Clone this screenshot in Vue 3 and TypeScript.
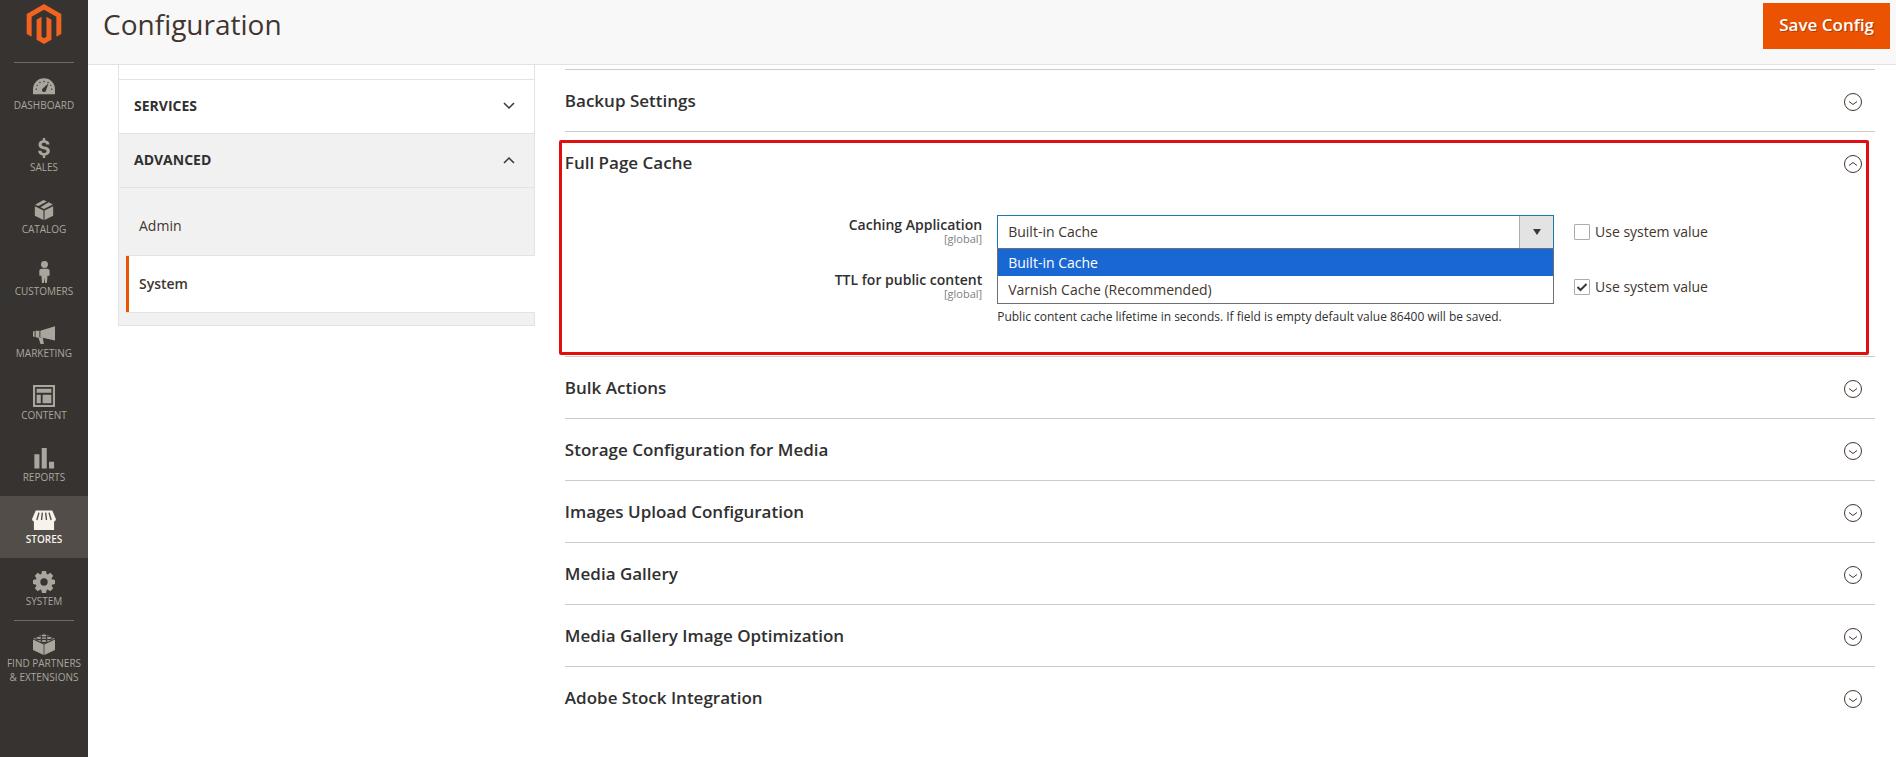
<script setup lang="ts">
import { ref } from 'vue'

interface MenuItem { id: string; label: string; active?: boolean; divided?: boolean }
interface Section { id: string; title: string }

const menu: MenuItem[] = [
  { id: 'dashboard', label: 'Dashboard' },
  { id: 'sales', label: 'Sales' },
  { id: 'catalog', label: 'Catalog' },
  { id: 'customers', label: 'Customers' },
  { id: 'marketing', label: 'Marketing' },
  { id: 'content', label: 'Content' },
  { id: 'reports', label: 'Reports' },
  { id: 'stores', label: 'Stores', active: true },
  { id: 'system', label: 'System' },
  { id: 'partners', label: 'Find Partners & Extensions', divided: true },
]

const sections: Section[] = [
  { id: 'backup', title: 'Backup Settings' },
  { id: 'cache', title: 'Full Page Cache' },
  { id: 'bulk', title: 'Bulk Actions' },
  { id: 'storage', title: 'Storage Configuration for Media' },
  { id: 'upload', title: 'Images Upload Configuration' },
  { id: 'gallery', title: 'Media Gallery' },
  { id: 'optimization', title: 'Media Gallery Image Optimization' },
  { id: 'stock', title: 'Adobe Stock Integration' },
]

const cacheOptions = ['Built-in Cache', 'Varnish Cache (Recommended)']
const cacheApp = ref(cacheOptions[0])
const appInherit = ref(false)
const ttlInherit = ref(true)
const ttl = ref('86400')
</script>

<template>
  <div class="page">
    <aside class="menu">
      <a class="logo" href="#" aria-label="Magento Admin">
        <svg viewBox="0 0 24 24" width="40" height="40" fill="#f26322">
          <path d="M12 24l-4.455-2.572v-12l2.97-1.715v12.001l1.485.902 1.485-.902V7.713l2.971 1.715v12L12 24zM22.391 6v12l-2.969 1.714V7.713L12 3.43 4.574 7.713v12.001L1.609 18V6L12 0l10.391 6z" />
        </svg>
      </a>
      <nav aria-label="Main menu">
        <a
          v-for="item in menu"
          :key="item.id"
          href="#"
          class="menu-item"
          :class="{ active: item.active, divided: item.divided }"
        >
          <svg class="menu-icon" viewBox="0 0 24 24" fill="currentColor" aria-hidden="true">
            <template v-if="item.id === 'dashboard'">
              <path d="M0 21v-5.500a12 12 0 0 1 24 0V21z" />
              <g fill="#373330">
                <circle cx="3.500" cy="15.500" r=".8" /><circle cx="4.600" cy="11.300" r=".8" /><circle cx="7.600" cy="8.200" r=".8" />
                <circle cx="12" cy="7" r=".8" /><circle cx="16.400" cy="8.200" r=".8" /><circle cx="20.500" cy="15.500" r=".8" /><circle cx="19.400" cy="11.300" r=".8" />
                <path d="M17 9l-2.800 7.500a2.200 2.200 0 1 1-3.200-2z" />
              </g>
            </template>
            <path
              v-else-if="item.id === 'sales'"
              d="M10.700 1h2.600v2.600c2.700.4 4.600 2 4.800 4.700h-3.600c-.2-1.300-1-2-2.500-2-1.600 0-2.500.7-2.500 1.800 0 1.200 1 1.700 3.200 2.200 3.400.8 5.700 1.900 5.700 5 0 2.700-1.900 4.500-5.100 4.900v2.600h-2.600v-2.600c-3.100-.4-5-2.200-5.100-5.200h3.600c.1 1.700 1.100 2.500 3 2.500 1.700 0 2.600-.7 2.600-1.900 0-1.300-.9-1.700-3.200-2.200-3.300-.8-5.600-1.900-5.600-5 0-2.500 1.700-4.300 4.700-4.800z"
            />
            <g v-else-if="item.id === 'catalog'">
              <path d="M2 8l9.400 4.600v10.400L2 18.200zM22 8l-9.400 4.600v10.400l9.400-4.800zM11.500 1l3.600 1.700-9.200 5L2.300 6.200zM17.200 3.600l4.500 2.400-9.700 5-3.800-2.100z" />
            </g>
            <g v-else-if="item.id === 'customers'">
              <circle cx="12.500" cy="3.800" r="3.800" />
              <path d="M9.500 8.500h6c1.700 0 2.600 1 2.600 2.500v5h-2.300l-.6 8h-2.100l-.6-6-.6 6H9.800L9.200 16H6.900v-5c0-1.500.9-2.500 2.600-2.500z" />
            </g>
            <g v-else-if="item.id === 'marketing'">
              <path d="M24 3.500v15.500L8 15.500v-7zM0 9.300l1.800-.6v6.600L0 14.700zM2.800 8.500H7v7l3.800.9 1 6.600H8.200L6 16l-3.200-.4z" />
            </g>
            <path
              v-else-if="item.id === 'content'"
              fill-rule="evenodd"
              d="M0 0h24v24H0zM2.300 2.300v19.400h19.400V2.300zM4 4h16v4.500H4zM4 10.500h4.500V20H4zM10.500 10.500H20V20h-9.500z"
            />
            <path v-else-if="item.id === 'reports'" d="M1.500 8h5.500v15.500H1.500zM9.500 1h5.500v22.500H9.500zM17.500 16H23v7.500h-5.500z" />
            <g v-else-if="item.id === 'stores'">
              <path d="M3 1.500h18L25 11c0 1.500-1 2.500-2 2.500V23H1v-9.500c-1 0-2-1-2-2.500z" />
              <path d="M6.500 4L4.200 12M10.200 4L9.300 12M13.800 4l.9 8M17.500 4l2.300 8" fill="none" stroke="#524d49" stroke-width="1.500" />
            </g>
            <g v-else-if="item.id === 'system'">
              <circle cx="12" cy="12" r="6.500" fill="none" stroke="currentColor" stroke-width="5" />
              <path
                v-for="tooth in 8"
                :key="tooth"
                d="M9.800 0h4.400l1 4.500H8.800z"
                :transform="`rotate(${tooth * 45} 12 12)`"
              />
            </g>
            <g v-else>
              <path d="M0 7l11.600 5.500V24L0 18.500zM24 7l-11.600 5.500V24L24 18.500zM12 .5L23.500 6 12 11.500.5 6z" />
              <g fill="currentColor" stroke="#373330" stroke-width="1.200">
                <ellipse cx="12" cy="2.600" rx="3.200" ry="1.700" /><ellipse cx="6.300" cy="5.500" rx="3.200" ry="1.700" />
                <ellipse cx="17.700" cy="5.500" rx="3.200" ry="1.700" /><ellipse cx="12" cy="8.600" rx="3.200" ry="1.700" />
              </g>
            </g>
          </svg>
          <span>{{ item.label }}</span>
        </a>
      </nav>
    </aside>

    <div class="main">
      <header class="header">
        <h1>Configuration</h1>
        <button type="button" class="save">Save Config</button>
      </header>

      <div class="columns">
        <nav class="config-nav" aria-label="Configuration sections">
          <div class="nav-rest"></div>
          <button type="button" class="nav-group" aria-expanded="false">
            Services
            <svg viewBox="0 0 12 8" width="12" height="8"><path d="M1 1l5 5 5-5" /></svg>
          </button>
          <button type="button" class="nav-group open" aria-expanded="true">
            Advanced
            <svg viewBox="0 0 12 8" width="12" height="8"><path d="M1 7l5-5 5 5" /></svg>
          </button>
          <div class="nav-items">
            <a href="#" class="nav-link">Admin</a>
            <a href="#" class="nav-link current" aria-current="page">System</a>
          </div>
        </nav>

        <main class="content">
          <section v-for="section in sections" :key="section.id" class="section" :class="{ marked: section.id === 'cache' }">
            <h2>
              <button type="button" class="section-head" :aria-expanded="section.id === 'cache'">
                {{ section.title }}
                <svg viewBox="0 0 20 20" width="20" height="20" fill="none" stroke="#41362f">
                  <circle cx="10" cy="11" r="8.500" />
                  <path :d="section.id === 'cache' ? 'M6 12.500l4-3 4 3' : 'M6 10.500l4 3 4-3'" />
                </svg>
              </button>
            </h2>

            <div v-if="section.id === 'cache'" class="fields">
              <div class="field">
                <div class="field-label">
                  <label for="caching-app">Caching Application</label>
                  <span>[global]</span>
                </div>
                <div class="field-value">
                  <div class="select-box">
                    <select id="caching-app" v-model="cacheApp">
                      <option v-for="option in cacheOptions" :key="option">{{ option }}</option>
                    </select>
                    <span class="arrow" aria-hidden="true"><svg viewBox="0 0 8 6" width="8" height="6"><path d="M0 0h8L4 6z" fill="#41362f" /></svg></span>
                    <ul class="options" role="listbox" aria-label="Caching Application">
                      <li
                        v-for="option in cacheOptions"
                        :key="option"
                        role="option"
                        :aria-selected="option === cacheApp"
                        :class="{ selected: option === cacheApp }"
                        @click="cacheApp = option"
                      >{{ option }}</li>
                    </ul>
                  </div>
                </div>
                <label class="inherit"><input v-model="appInherit" type="checkbox" />Use system value</label>
              </div>

              <div class="field">
                <div class="field-label">
                  <label for="ttl">TTL for public content</label>
                  <span>[global]</span>
                </div>
                <div class="field-value">
                  <input id="ttl" v-model="ttl" class="text" type="text" :disabled="ttlInherit" />
                  <p class="note">Public content cache lifetime in seconds. If field is empty default value 86400 will be saved.</p>
                </div>
                <label class="inherit"><input v-model="ttlInherit" type="checkbox" />Use system value</label>
              </div>
            </div>
          </section>
        </main>
      </div>
    </div>
  </div>
</template>

<style>
body { background: #fff; }
</style>

<style scoped>
* { box-sizing: border-box; }
.page {
  display: flex;
  min-height: 100vh;
  font-family: "Open Sans", "Noto Sans", sans-serif;
  font-size: 14px;
  line-height: 20px;
  color: #41362f;
}
button, input, select { font: inherit; color: inherit; }
button { cursor: pointer; }

/* Main menu */
.menu { flex: 0 0 88px; background: #373330; }
.logo {
  display: flex;
  justify-content: center;
  height: 63px;
  margin: 0 14px;
  padding-top: 4px;
  border-bottom: 1px solid #736963;
}
.menu nav { margin-top: -1px; }
.menu-item {
  display: flex;
  flex-direction: column;
  align-items: center;
  height: 62px;
  padding: 13px 5px 0;
  color: #aaa69d;
  font-size: 10px;
  line-height: 14px;
  text-align: center;
  text-decoration: none;
  text-transform: uppercase;
}
.menu-item.active { background: #524d49; color: #f7f3eb; font-weight: 600; }
.menu-item.divided { position: relative; height: auto; }
.menu-item.divided::before {
  content: "";
  position: absolute;
  top: 0;
  left: 14px;
  right: 14px;
  border-top: 1px solid #736963;
}
.menu-item span { max-width: 78px; }
.menu-icon { flex: none; width: 22px; height: 22px; margin-bottom: 1px; overflow: visible; }

/* Page header */
.main { flex: 1; min-width: 0; }
.header {
  display: flex;
  align-items: flex-start;
  justify-content: space-between;
  height: 65px;
  padding: 3px 6px 0 15px;
  background: #f8f8f8;
  border-bottom: 1px solid #e3e3e3;
}
h1 { margin: 0; font-size: 28px; line-height: 42px; font-weight: 400; }
.save {
  height: 46px;
  padding: 0 16px 2px;
  border: 0;
  background: #eb5202;
  color: #fff;
  font-size: 17px;
  font-weight: 600;
  text-shadow: 1px 1px 0 rgba(0, 0, 0, .25);
}

/* Columns */
.columns {
  display: grid;
  grid-template-columns: minmax(0, 7fr) minmax(0, 22fr);
  gap: 30px;
  align-items: start;
  padding: 0 21px 0 30px;
}
.config-nav { border: 1px solid #e3e3e3; border-top: 0; }
.nav-rest { height: 14px; }
.nav-group {
  display: flex;
  align-items: center;
  justify-content: space-between;
  width: 100%;
  height: 54px;
  padding: 0 19px 2px 15px;
  border: 0;
  border-top: 1px solid #e3e3e3;
  background: #fff;
  color: #303030;
  font-weight: 700;
  text-transform: uppercase;
}
.nav-group svg { fill: none; stroke: #41362f; stroke-width: 1.500; }
.nav-group.open, .nav-items { background: #f1f1f1; }
.nav-items { padding: 10px 0 12px 7px; border-top: 1px solid #e3e3e3; }
.nav-link {
  display: block;
  padding: 18px 10px 19px 13px;
  color: #41362f;
  text-decoration: none;
}
.nav-link.current {
  margin-right: -1px;
  padding: 18px 10px 18px 13px;
  border: solid #e3e3e3;
  border-width: 1px 0;
  background: #fff;
  box-shadow: inset 3px 0 #eb5202;
  font-weight: 600;
}

/* Collapsible sections */
.content { margin-top: 4px; border-top: 1px solid #ccc; }
.section { border-bottom: 1px solid #ccc; }
.section:last-child { border-bottom: 0; }
h2 { margin: 0; font-size: 17px; line-height: 22px; }
.section-head {
  display: flex;
  align-items: center;
  justify-content: space-between;
  width: 100%;
  height: 61px;
  padding: 0 12px 0 0;
  border: 0;
  background: none;
  color: #303030;
  font-weight: 600;
}
.marked { position: relative; }
.marked::after {
  content: "";
  position: absolute;
  inset: 8px 6px 1px -6px;
  border: 3px solid #e01010;
  border-radius: 2px;
  pointer-events: none;
}

/* Fields */
.fields { padding: 22px 0 30px; }
.field { display: grid; grid-template-columns: 33% 42.5% 1fr; align-items: start; }
.field + .field { margin-top: 21px; }
.field-label { display: flex; flex-direction: column; padding-right: 15px; text-align: right; }
.field-label label { color: #303030; font-weight: 600; }
.field-label span { color: #808080; font-size: 11px; line-height: 8px; }
.select-box { position: relative; }
select, .text {
  display: block;
  width: 100%;
  height: 34px;
  padding: 0 10px;
  border: 1px solid #adadad;
  border-radius: 0;
  background: #fff;
  outline: 0;
}
select { appearance: none; border-color: #1979a9; }
.arrow {
  position: absolute;
  top: 1px;
  right: 1px;
  display: flex;
  align-items: center;
  justify-content: center;
  width: 34px;
  height: 32px;
  border-left: 1px solid #adadad;
  background: #e3e3e3;
  pointer-events: none;
}
.options {
  position: absolute;
  z-index: 1;
  top: 33px;
  left: 0;
  right: 0;
  margin: 0;
  padding: 0;
  border: 1px solid #6f6f76;
  background: #fff;
  list-style: none;
}
.options li { padding: 0 10px; line-height: 27px; }
.options .selected { background: #1967d2; color: #fff; }
.note { margin: 4px 0 0; font-size: 12px; line-height: 18px; color: #303030; }
.inherit { display: flex; align-items: center; gap: 5px; padding: 7px 0 0 20px; }
.inherit input {
  appearance: none;
  width: 16px;
  height: 16px;
  margin: 0;
  border: 1px solid #adadad;
  border-radius: 1px;
  background: #fff;
}
.inherit input:checked {
  background: #fff url("data:image/svg+xml,%3Csvg xmlns='http://www.w3.org/2000/svg' viewBox='0 0 14 14'%3E%3Cpath d='M2.500 7l3 3 6-6' fill='none' stroke='%2341362f' stroke-width='2'/%3E%3C/svg%3E") center / 14px no-repeat;
}
</style>
